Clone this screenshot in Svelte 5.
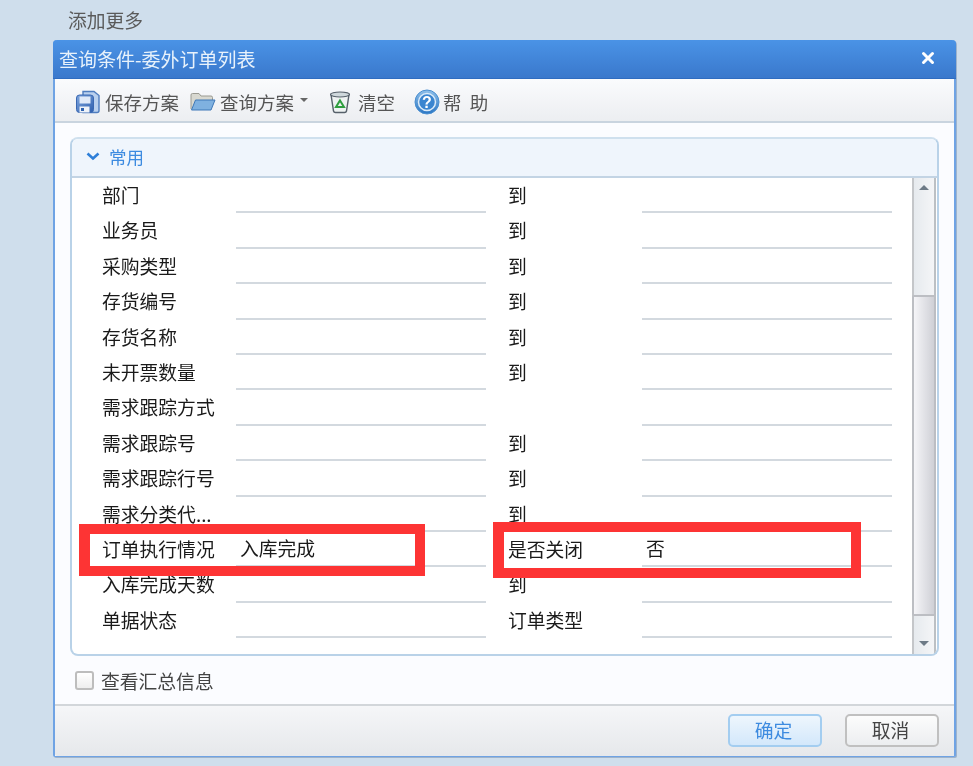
<script>
  const rows = [
    ['部门', '到'], ['业务员', '到'], ['采购类型', '到'], ['存货编号', '到'], ['存货名称', '到'],
    ['未开票数量', '到'], ['需求跟踪方式', null], ['需求跟踪号', '到'], ['需求跟踪行号', '到'],
    ['需求分类代...', '到'], ['订单执行情况', '是否关闭', '入库完成', '否'],
    ['入库完成天数', '到'], ['单据状态', '订单类型']
  ];
</script>

<div class="page">
  <div class="more">添加更多</div>
  <div class="dialog">
    <header class="title">
      <span>查询条件-委外订单列表</span>
      <svg class="close" viewBox="0 0 14 14" width="14" height="14"><path d="M2.5 2.5L11.5 11.5M11.5 2.5L2.5 11.5" stroke="#fff" stroke-width="3" stroke-linecap="round"/></svg>
    </header>
    <div class="toolbar">
      <div class="tool first">
        <svg viewBox="0 0 26 24" width="26" height="24">
          <defs><linearGradient id="sg" x1="0" y1="0" x2="1" y2="1"><stop offset="0" stop-color="#7fa6de"/><stop offset="1" stop-color="#2e5fae"/></linearGradient></defs>
          <path d="M8 1.500h11l5 4v15a2 2 0 0 1-2 2H8z" fill="#b9d0ee" stroke="#4f7dbf" stroke-width="1.400"/>
          <rect x="1.500" y="5" width="17" height="17.500" rx="3" fill="url(#sg)" stroke="#3a68b2"/>
          <rect x="4.500" y="6.500" width="11" height="7" fill="#dfe9f8"/>
          <rect x="4.500" y="16.500" width="10" height="6" fill="#eef2f8"/>
          <rect x="6" y="18" width="3" height="3" fill="#2f62b0"/>
        </svg>
        <span>保存方案</span>
      </div>
      <div class="tool folder">
        <svg viewBox="0 0 26 20" width="26" height="20">
          <path d="M1 17V3a1.500 1.500 0 0 1 1.500-1.500H9l2 2.500h10a1.500 1.500 0 0 1 1.500 1.500V8" fill="#d8d8d0" stroke="#9a9a92"/>
          <path d="M1.500 18L5.500 8H25l-4 10z" fill="#7fb1e0" stroke="#3f79b8"/>
        </svg>
        <span>查询方案</span>
        <i class="caret"></i>
      </div>
      <div class="tool clear">
        <svg viewBox="0 0 22 24" width="22" height="24">
          <path d="M2 4.500L4.500 21a2 2 0 0 0 2 1.500h9a2 2 0 0 0 2-1.500L20 4.500z" fill="#eef2f2" stroke="#56606a" stroke-width="1.400"/>
          <ellipse cx="11" cy="4.500" rx="9.500" ry="2.500" fill="#cfd8dc" stroke="#56606a" stroke-width="1.200"/>
          <path d="M11 10.500l4 6.500H7z" fill="none" stroke="#2f9e3f" stroke-width="2"/>
        </svg>
        <span>清空</span>
      </div>
      <div class="tool help">
        <svg viewBox="0 0 26 26" width="26" height="26">
          <defs><linearGradient id="hg" x1="0" y1="0" x2="0" y2="1"><stop offset="0" stop-color="#8fc0ea"/><stop offset="1" stop-color="#2a76c4"/></linearGradient></defs>
          <circle cx="13" cy="13" r="12" fill="url(#hg)" stroke="#4b8fd0"/>
          <circle cx="13" cy="13" r="8.500" fill="#3a85d0" stroke="#dcebf8" stroke-width="1.500"/>
          <text x="13" y="18.500" text-anchor="middle" class="q">?</text>
        </svg>
        <span>帮&nbsp;&nbsp;助</span>
      </div>
    </div>

    <div class="body">
      <section class="panel">
        <div class="panel-head">
          <svg viewBox="0 0 14 9" width="14" height="9"><path d="M1.500 1.500L7 6.500L12.500 1.500" fill="none" stroke="#2f7fd8" stroke-width="2.600"/></svg>
          <span>常用</span>
        </div>
        <div class="panel-body">
          <div class="grid">
            {#each rows as r}
              <div class="label" class:dots={r[0].endsWith('...')}>{r[0]}</div>
              <div class="field">{r[2] ?? ''}</div>
              <div class="label">{r[1] ?? ''}</div>
              <div class="field">{r[3] ?? ''}</div>
            {/each}
          </div>
          <div class="scroll">
            <svg class="arrow" viewBox="0 0 12 6" width="12" height="6"><path d="M1 6L6 1l5 5z" fill="#6d7a86"/></svg>
            <div class="thumb"></div>
            <svg class="arrow down" viewBox="0 0 12 6" width="12" height="6"><path d="M1 0l5 5 5-5z" fill="#6d7a86"/></svg>
          </div>
        </div>
      </section>
      <label class="check"><i class="box"></i><span>查看汇总信息</span></label>
    </div>

    <footer class="footer">
      <button class="btn ok">确定</button>
      <button class="btn">取消</button>
    </footer>
  </div>

  <div class="mark left"></div>
  <div class="mark right"></div>
</div>

<style>
  :global(body) { margin: 0; }
  .page {
    position: relative; width: 973px; height: 766px; overflow: hidden; background: #cfdeec;
    font-family: "Noto Sans CJK SC", "Liberation Sans", sans-serif; font-size: 18.800px; color: #1a1a1a;
    box-sizing: border-box; padding: 0 17px 0 53px;
    filter: blur(0.4px);
  }
  .more { height: 40px; line-height: 40px; padding-left: 15px; color: #5a5a5a; }
  .dialog {
    height: 717px; display: flex; flex-direction: column; box-sizing: border-box;
    border: 1px solid #6fa3e4; border-top: 0; border-radius: 4px 4px 2px 2px; border-left-width: 2px; border-right-width: 2px;
    background: #fbfcff; box-shadow: 1px 1px 0 #9fb4cc;
  }
  .title {
    height: 39px; flex: none; display: flex; align-items: center; justify-content: space-between;
    padding: 0 21px 2px 6px; box-sizing: border-box; margin: 0 -2px; border-radius: 4px 4px 0 0;
    background: linear-gradient(#4a93e6, #3a78cc); color: #e8f2fb; border-bottom: 1px solid #2f6cc0; font-size: 19px;
  }
  .toolbar {
    height: 44px; flex: none; box-sizing: border-box; display: flex; align-items: center; padding: 3px 0 0 20px;
    background: linear-gradient(#fafbfd, #eceef1); border-bottom: 2px solid #c9d4df; color: #555; font-size: 18.500px;
  }
  .tool { display: flex; align-items: center; }
  .tool span { margin-left: 4px; }
  .folder { margin-left: 11px; }
  .caret { margin: 0 0 3px 6px; border: 4px solid transparent; border-top-color: #666; border-bottom: 0; }
  .clear { margin-left: 21px; }
  .clear span { margin-left: 7px; }
  .help { margin-left: 19px; }
  .help span { margin-left: 3px; }
  .q { font: bold 16px "Liberation Sans", sans-serif; fill: #fff; }
  .body { flex: none; height: 583px; box-sizing: border-box; padding: 14px 15px 0 15px; border-bottom: 2px solid #d2d6da; }
  .panel {
    height: 519px; box-sizing: border-box; display: flex; flex-direction: column;
    border: 2px solid #b9d2e8; border-top-color: #cfe0ee; border-radius: 8px; background: #fff; overflow: hidden;
  }
  .panel-head {
    height: 39px; flex: none; display: flex; align-items: center; box-sizing: border-box; padding: 0 0 3px 14px;
    background: #eff5fc; border-bottom: 2px solid #c3d4e4; color: #3d8be0; font-size: 17.500px;
  }
  .panel-head span { margin-left: 9px; }
  .panel-body { flex: 1; min-height: 0; display: flex; justify-content: space-between; }
  .grid {
    display: grid; grid-template-columns: 134px 250px 156px 250px; grid-auto-rows: 35.400px;
    padding: 0 0 0 30px; height: max-content;
  }
  .label { line-height: 33.400px; white-space: nowrap; height: 35.400px; }
  .label.dots { letter-spacing: 0; word-spacing: 0; }
  .label:nth-child(4n + 3) { padding-left: 22px; }
  .field { box-sizing: border-box; border-bottom: 2px solid #d3d9df; line-height: 32px; padding-left: 4px; white-space: nowrap; }
  .scroll {
    width: 24px; margin-right: 1px; flex: none; box-sizing: border-box; display: flex; flex-direction: column; align-items: center;
    background: linear-gradient(90deg, #e6eaee, #f4f5f7); border-left: 2px solid #c4c6c9; border-right: 2px solid #bcc0c4;
  }
  .arrow { flex: none; margin-top: 6px; }
  .thumb {
    width: 24px; height: 321px; margin-top: 105px; flex: none; box-sizing: border-box;
    background: linear-gradient(90deg, #f5f5f8, #cfd0d6); border: 2px solid #bcbec3; border-radius: 2px;
  }
  .arrow.down { margin-top: 25px; }
  .check { display: flex; align-items: center; height: 53px; padding: 0 0 4px 5px; box-sizing: border-box; color: #444; }
  .box {
    width: 15px; height: 15px; border: 2px solid #bdbdbd; border-radius: 3px; background: linear-gradient(#fff, #eee); margin-right: 7px;
  }
  .footer {
    flex: 1; min-height: 0; display: flex; justify-content: flex-end; align-items: center; gap: 23px; padding: 0 15px 2px 0;
    background: linear-gradient(#f5f6f8, #e6e8eb); border-bottom-left-radius: 2px;
  }
  .btn {
    width: 94px; height: 33px; padding: 0 3px 0 0; border: 2px solid #c0c0c0; border-radius: 5px; color: #444;
    background: linear-gradient(#fcfcfc, #eceef0); font: inherit; font-size: 18.800px; line-height: 1;
  }
  .ok { border-color: #a3cdf0; background: linear-gradient(#eef6fd, #d3e8fb); color: #3d8be0; }
  .mark { position: absolute; box-sizing: border-box; border: 10px solid #fd3434; }
  .mark.left { left: 79px; top: 524px; width: 346px; height: 52px; border-left-width: 11px; }
  .mark.right { left: 493px; top: 522px; width: 368px; height: 56px; border-left-width: 11px; }
</style>
